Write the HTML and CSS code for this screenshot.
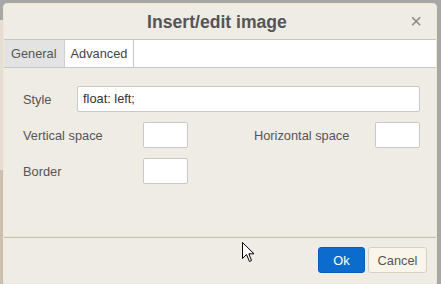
FILE: index.html
```html
<!DOCTYPE html>
<html>
<head>
<meta charset="utf-8">
<link rel="stylesheet" href="styles.css">
</head>
<body>
<div class="dialog">
  <div class="head">
    <div class="title">Insert/edit image</div>
    <div class="close">×</div>
  </div>
  <div class="tabs">
    <div class="tab">General</div>
    <div class="tab active">Advanced</div>
  </div>
  <div class="panel">
    <div class="row">
      <label class="lbl lbl-style">Style</label>
      <div class="input wide">float: left;</div>
    </div>
    <div class="row">
      <label class="lbl lbl-a">Vertical space</label>
      <div class="input small"></div>
      <label class="lbl lbl-b">Horizontal space</label>
      <div class="input small"></div>
    </div>
    <div class="row">
      <label class="lbl lbl-a">Border</label>
      <div class="input small"></div>
    </div>
  </div>
  <div class="foot">
    <button class="btn primary">Ok</button>
    <button class="btn">Cancel</button>
  </div>
  <svg class="cursor" width="13" height="21" viewBox="0 0 13 21">
    <path d="M0.5 0.5 L0.5 16.5 L4.5 12.5 L7.5 19.5 L9.5 18.5 L6.8 11.8 L12 11.8 Z" fill="#fff" stroke="#000" stroke-width="1" stroke-linejoin="miter"/>
  </svg>
</div>
</body>
</html>
```

FILE: styles.css
```css
html, body {
  margin: 0;
  padding: 0;
}
body {
  width: 441px;
  height: 284px;
  overflow: hidden;
  background:
    linear-gradient(to right, #e4ded4 0, #e4ded4 3px, transparent 3px) 0 20px / 3px 150px no-repeat,
    linear-gradient(to right, #c9c0b0 0, #c9c0b0 3px, transparent 3px) 0 170px / 3px 114px no-repeat,
    #a7a7a7;
  padding: 3px 4px 0 3px;
  box-sizing: border-box;
  font-family: "Liberation Sans", Arial, sans-serif;
}
.dialog {
  position: relative;
  width: 434px;
  height: 281px;
  background: #efebe5;
  border: 1px solid #f3e8cf;
  border-radius: 4px 4px 0 0;
  box-sizing: border-box;
  display: flex;
  flex-direction: column;
}
.head {
  height: 35px;
  flex: none;
  display: flex;
  align-items: center;
  justify-content: center;
  position: relative;
  border-bottom: 1px solid #c9c6c1;
}
.title {
  font-size: 17.6px;
  font-weight: bold;
  color: #555;
  margin-left: -6px;
  margin-top: 1px;
}
.close {
  position: absolute;
  right: 14px;
  top: 7px;
  font-size: 20px;
  color: #8a8a8a;
  line-height: 20px;
}
.tabs {
  height: 27px;
  flex: none;
  display: flex;
  background: #fff;
  border-bottom: 1px solid #c9c6c1;
}
.tab {
  font-size: 12.8px;
  color: #555;
  padding: 0 7px 0 7px;
  line-height: 27px;
  background: #e3e3e3;
  border-right: 1px solid #cfcfcf;
}
.tab.active {
  background: #fff;
  color: #444;
  padding: 0 6px 0 6px;
  border-right: 1px solid #c5c5c5;
}
.panel {
  flex: 1;
  padding: 18px 16px 0 19px;
  display: flex;
  flex-direction: column;
  gap: 10px;
  border-bottom: 1px solid #f2e6c8;
}
.row {
  display: flex;
  align-items: center;
  height: 26px;
}
.lbl {
  font-size: 12.8px;
  color: #555;
  flex: none;
}
.lbl-style { width: 54px; }
.lbl-a { width: 120px; }
.lbl-b { width: 121px; margin-left: 66px; }
.input {
  height: 26px;
  box-sizing: border-box;
  background: #fff;
  border: 1px solid #c9c9c9;
  border-radius: 2px;
  font-size: 12.8px;
  color: #333;
  line-height: 24px;
  padding: 0 5px;
}
.wide { width: 343px; }
.small { width: 45px; }
.foot {
  height: 46px;
  flex: none;
  border-top: 1px solid #c4c1bc;
  display: flex;
  justify-content: flex-end;
  align-items: flex-start;
  padding: 9px 9px 0 0;
  box-sizing: border-box;
  gap: 3px;
}
.btn {
  height: 26px;
  font-family: "Liberation Sans", Arial, sans-serif;
  font-size: 12.8px;
  color: #555;
  background: #faf5ea;
  border: 1px solid #d6d0c4;
  border-radius: 3px;
  padding: 0;
  width: 59px;
  margin: 0;
}
.btn.primary {
  width: 47px;
  background: #0b6cce;
  border-color: #0a5db3;
  color: #fff;
}
.cursor {
  position: absolute;
  left: 238px;
  top: 238px;
}
```
